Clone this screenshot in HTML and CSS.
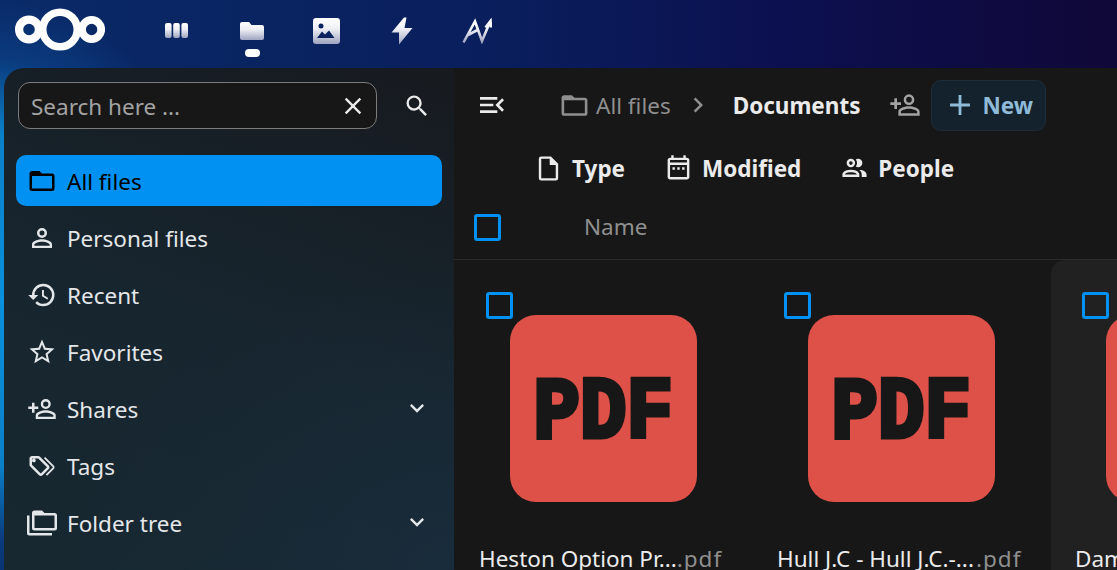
FILE: index.html
```html
<!DOCTYPE html>
<html lang="en">
<head>
<meta charset="utf-8">
<title>Documents - Files</title>
<link rel="stylesheet" href="styles.css">
</head>
<body>
<header class="topbar">
  <svg class="logo" viewBox="0 0 91 44" aria-hidden="true">
    <circle cx="15" cy="21.500" r="9.900" class="ring" stroke-width="8.200"/>
    <circle cx="46" cy="21.500" r="17.300" class="ring" stroke-width="7.600"/>
    <circle cx="77.600" cy="21.500" r="9.600" class="ring" stroke-width="7.800"/>
  </svg>
  <nav class="apps">
    <a class="app app-dash"><svg viewBox="0 0 23 15"><defs><linearGradient id="hg" x1="0" y1="0" x2="0" y2="1"><stop offset="0" stop-color="#ffffff"/><stop offset="0.4" stop-color="#f0f1f6"/><stop offset="1" stop-color="#9ea4c0"/></linearGradient></defs><rect x="0" y="0" width="6.600" height="15" rx="2" class="gr"/><rect x="8.200" y="0" width="6.600" height="15" rx="2" class="gr"/><rect x="16.400" y="0" width="6.600" height="15" rx="2" class="gr"/></svg></a>
    <a class="app app-files"><svg viewBox="0 0 24 18"><path class="gr" d="M2 0h7l2.500 3H22a2 2 0 0 1 2 2v11a2 2 0 0 1-2 2H2a2 2 0 0 1-2-2V2a2 2 0 0 1 2-2z"/></svg><span class="app-dot"></span></a>
    <a class="app app-photos"><svg viewBox="0 0 27 26"><path class="gr" fill-rule="evenodd" d="M3 0h21a3 3 0 0 1 3 3v20a3 3 0 0 1-3 3H3a3 3 0 0 1-3-3V3a3 3 0 0 1 3-3zM8 5.500a2.500 2.500 0 1 0 0 5 2.500 2.500 0 0 0 0-5zM4 20 L9 13.500 L12 16.500 L16 12.500 L21.500 20z"/></svg></a>
    <a class="app app-bolt"><svg viewBox="0 0 22 28"><path class="gr" d="M13 .5 L.5 15.500 H8 L8 27.500 L21.500 11 H13.500 L15.500 .5Z"/></svg></a>
    <a class="app app-av"><svg viewBox="0 0 30 26"><path class="gs" fill="none" stroke-width="2.600" d="M1.500 24.500 L13 3.500 L20 23 L27.500 5 M6 17 L15.500 12 M23.500 9.500 L28.500 3 L29 9.500"/></svg></a>
  </nav>
</header>

<main class="window">
  <aside class="sidebar">
    <div class="search-row">
      <div class="search-box">
        <span class="search-text">Search here ...</span>
        <svg class="ic ic-close" viewBox="0 0 24 24"><path d="M19,6.41L17.59,5L12,10.59L6.41,5L5,6.41L10.59,12L5,17.59L6.41,19L12,13.41L17.59,19L19,17.59L13.41,12L19,6.41Z"/></svg>
      </div>
      <svg class="ic ic-search" viewBox="0 0 24 24"><path d="M9.5,3A6.5,6.5 0 0,1 16,9.5C16,11.11 15.41,12.59 14.44,13.73L14.71,14H15.5L20.5,19L19,20.5L14,15.5V14.71L13.73,14.44C12.59,15.41 11.11,16 9.5,16A6.5,6.5 0 0,1 3,9.5A6.5,6.5 0 0,1 9.5,3M9.5,5C7,5 5,7 5,9.5C5,12 7,14 9.5,14C12,14 14,12 14,9.5C14,7 12,5 9.5,5Z"/></svg>
    </div>
    <ul class="nav">
      <li class="nav-item active"><svg class="ic" viewBox="0 0 24 24"><path d="M20,18H4V8H20M20,6H12L10,4H4C2.89,4 2,4.89 2,6V18A2,2 0 0,0 4,20H20A2,2 0 0,0 22,18V8C22,6.89 21.1,6 20,6Z"/></svg><span>All files</span></li>
      <li class="nav-item"><svg class="ic" viewBox="0 0 24 24"><path d="M12,4A4,4 0 0,1 16,8A4,4 0 0,1 12,12A4,4 0 0,1 8,8A4,4 0 0,1 12,4M12,6A2,2 0 0,0 10,8A2,2 0 0,0 12,10A2,2 0 0,0 14,8A2,2 0 0,0 12,6M12,13C14.67,13 20,14.33 20,17V20H4V17C4,14.33 9.33,13 12,13M12,14.9C9.03,14.9 5.9,16.36 5.9,17V18.1H18.1V17C18.1,16.36 14.97,14.9 12,14.9Z"/></svg><span>Personal files</span></li>
      <li class="nav-item"><svg class="ic" viewBox="0 0 24 24"><path d="M13.5,8H12V13L16.28,15.54L17,14.33L13.5,12.25V8M13,3A9,9 0 0,0 4,12H1L4.96,16.03L9,12H6A7,7 0 0,1 13,5A7,7 0 0,1 20,12A7,7 0 0,1 13,19C11.07,19 9.32,18.21 8.06,16.94L6.64,18.36C8.27,20 10.5,21 13,21A9,9 0 0,0 22,12A9,9 0 0,0 13,3"/></svg><span>Recent</span></li>
      <li class="nav-item"><svg class="ic" viewBox="0 0 24 24"><path d="M12,15.39L8.24,17.66L9.23,13.38L5.91,10.5L10.29,10.13L12,6.09L13.71,10.13L18.09,10.5L14.77,13.38L15.76,17.66M22,9.24L14.81,8.63L12,2L9.19,8.63L2,9.24L7.45,13.97L5.82,21L12,17.27L18.18,21L16.54,13.97L22,9.24Z"/></svg><span>Favorites</span></li>
      <li class="nav-item"><svg class="ic" viewBox="0 0 24 24"><path d="M15,4A4,4 0 0,0 11,8A4,4 0 0,0 15,12A4,4 0 0,0 19,8A4,4 0 0,0 15,4M15,5.9A2.1,2.1 0 0,1 17.1,8A2.1,2.1 0 0,1 15,10.1A2.1,2.1 0 0,1 12.9,8A2.1,2.1 0 0,1 15,5.9M4,7V10H1V12H4V15H6V12H9V10H6V7H4M15,13C12.33,13 7,14.33 7,17V20H23V17C23,14.33 17.67,13 15,13M15,14.9C17.97,14.9 21.1,16.36 21.1,17V18.1H8.9V17C8.9,16.36 12,14.9 15,14.9Z"/></svg><span>Shares</span><svg class="ic ic-chev" viewBox="0 0 24 24"><path d="M7.41,8.58L12,13.17L16.59,8.58L18,10L12,16L6,10L7.41,8.58Z"/></svg></li>
      <li class="nav-item"><svg class="ic" viewBox="0 0 24 24"><path fill-rule="evenodd" d="M5.5,9A1.5,1.5 0 0,0 7,7.5A1.5,1.5 0 0,0 5.5,6A1.5,1.5 0 0,0 4,7.5A1.5,1.5 0 0,0 5.5,9M17.41,11.58C17.77,11.94 18,12.44 18,13C18,13.55 17.78,14.05 17.41,14.41L12.41,19.41C12.05,19.77 11.55,20 11,20C10.45,20 9.95,19.78 9.58,19.41L2.59,12.42C2.22,12.05 2,11.55 2,11V6C2,4.89 2.89,4 4,4H9C9.55,4 10.05,4.22 10.41,4.58L17.41,11.58M4,6V11L11,18L16,13L9,6H4M13.54,5.71L14.54,4.71L21.41,11.58C21.78,11.94 22,12.45 22,13C22,13.55 21.78,14.05 21.42,14.41L16.04,19.79L15.04,18.79L20.75,13L13.54,5.71Z"/></svg><span>Tags</span></li>
      <li class="nav-item"><svg class="ic" viewBox="0 0 24 24"><path fill-rule="evenodd" d="M22,4A2,2 0 0,1 24,6V16A2,2 0 0,1 22,18H6A2,2 0 0,1 4,16V4A2,2 0 0,1 6,2H12L14,4H22M2,6V20H20V22H2A2,2 0 0,1 0,20V11H0V6H2M6,6V16H22V6H6Z"/></svg><span>Folder tree</span><svg class="ic ic-chev" viewBox="0 0 24 24"><path d="M7.41,8.58L12,13.17L16.59,8.58L18,10L12,16L6,10L7.41,8.58Z"/></svg></li>
    </ul>
  </aside>

  <section class="content">
    <div class="crumbs">
      <svg class="ic ic-menu" viewBox="0 0 24 24"><path d="M21,15.61L19.59,17L14.58,12L19.59,7L21,8.39L17.44,12L21,15.61M3,6H16V8H3V6M3,13V11H13V13H3M3,18V16H16V18H3Z"/></svg>
      <svg class="ic ic-root" viewBox="0 0 24 24"><path d="M20,18H4V8H20M20,6H12L10,4H4C2.89,4 2,4.89 2,6V18A2,2 0 0,0 4,20H20A2,2 0 0,0 22,18V8C22,6.89 21.1,6 20,6Z"/></svg>
      <span class="crumb-root">All files</span>
      <svg class="ic ic-sep" viewBox="0 0 24 24"><path d="M8.59,16.58L13.17,12L8.59,7.41L10,6L16,12L10,18L8.59,16.58Z"/></svg>
      <strong class="crumb-current">Documents</strong>
      <svg class="ic ic-share" viewBox="0 0 24 24"><path d="M15,4A4,4 0 0,0 11,8A4,4 0 0,0 15,12A4,4 0 0,0 19,8A4,4 0 0,0 15,4M15,5.9A2.1,2.1 0 0,1 17.1,8A2.1,2.1 0 0,1 15,10.1A2.1,2.1 0 0,1 12.9,8A2.1,2.1 0 0,1 15,5.9M4,7V10H1V12H4V15H6V12H9V10H6V7H4M15,13C12.33,13 7,14.33 7,17V20H23V17C23,14.33 17.67,13 15,13M15,14.9C17.97,14.9 21.1,16.36 21.1,17V18.1H8.9V17C8.9,16.36 12,14.9 15,14.9Z"/></svg>
      <button class="btn-new"><svg class="ic" viewBox="0 0 24 24"><path d="M19,13H13V19H11V13H5V11H11V5H13V11H19V13Z"/></svg><span>New</span></button>
    </div>
    <div class="filters">
      <div class="filter"><svg class="ic" viewBox="0 0 24 24"><path d="M14,2H6A2,2 0 0,0 4,4V20A2,2 0 0,0 6,22H18A2,2 0 0,0 20,20V8L14,2M18,20H6V4H13V9H18V20Z"/></svg><span>Type</span></div>
      <div class="filter"><svg class="ic" viewBox="0 0 24 24"><path d="M7 11H9V13H7V11M21 5V19C21 20.11 20.11 21 19 21H5C3.89 21 3 20.1 3 19V5C3 3.9 3.9 3 5 3H6V1H8V3H16V1H18V3H19C20.11 3 21 3.9 21 5M5 7H19V5H5V7M19 19V9H5V19H19M17 13V11H15V13H17M13 13V11H11V13H13Z"/></svg><span>Modified</span></div>
      <div class="filter"><svg class="ic" viewBox="0 0 24 24"><path d="M13.07 10.41A5 5 0 0 0 13.07 4.59A3.39 3.39 0 0 1 15 4A3.5 3.5 0 0 1 15 11A3.39 3.39 0 0 1 13.07 10.41M5.5 7.5A3.5 3.5 0 1 1 9 11A3.5 3.5 0 0 1 5.5 7.5M7.5 7.5A1.5 1.5 0 1 0 9 6A1.5 1.5 0 0 0 7.5 7.5M16 17V19H2V17S2 13 9 13 16 17 16 17M14 17C13.86 16.22 12.67 15 9 15S4.07 16.22 4 17M15.95 13A5.32 5.32 0 0 1 18 17V19H22V17S22 13.37 15.94 13Z"/></svg><span>People</span></div>
    </div>
    <div class="table-head">
      <span class="check"></span>
      <span class="col-name">Name</span>
    </div>
    <div class="grid">
      <article class="card">
        <span class="check check-card"></span>
        <div class="pdf"><span class="pdf-label">PDF</span></div>
        <p class="fname">Heston Option Pr...<span class="ext">.pdf</span></p>
      </article>
      <article class="card">
        <span class="check check-card"></span>
        <div class="pdf"><span class="pdf-label">PDF</span></div>
        <p class="fname">Hull J.C - Hull J.C.-...<span class="ext ext-gap">.pdf</span></p>
      </article>
      <article class="card card-hover">
        <span class="check check-card"></span>
        <div class="pdf"><span class="pdf-label">PDF</span></div>
        <p class="fname">Dam</p>
      </article>
    </div>
  </section>
</main>
</body>
</html>
```
FILE: styles.css
```css
* { box-sizing: border-box; }
html, body { margin: 0; height: 100%; }
body {
  width: 1117px;
  height: 570px;
  overflow: hidden;
  display: flex;
  flex-direction: column;
  font-family: "Noto Sans", sans-serif;
  font-size: 22.5px;
  color: #ebebeb;
  background:
    radial-gradient(ellipse 220px 300px at 0 300px, #0a90dc 0%, #0a80c8 55%, rgba(10,70,140,0.6) 80%, rgba(10,50,120,0) 100%),
    linear-gradient(90deg, #0a2a68 0%, #0a1e5c 45%, #0c1050 70%, #100838 100%);
}
.topbar {
  height: 68px;
  flex: none;
  display: flex;
  padding: 8px 0 0 14px;
}
.logo { width: 91px; height: 44px; flex: none; }
.ring { fill: none; stroke: #fff; }
.gr { fill: url(#hg); }
.gs { stroke: url(#hg); }
.apps { display: flex; align-items: flex-start; margin-left: 60px; }
.app { display: flex; flex-direction: column; align-items: center; flex: none; }
.app svg { display: block; }
.app-dash { margin-top: 15px; width: 23px; }
.app-dash svg { width: 23px; height: 15px; }
.app-files { margin: 14px 0 0 52px; width: 24px; }
.app-files svg { width: 24px; height: 18px; }
.app-dot { width: 15px; height: 8px; border-radius: 4px; background: #fff; margin-top: 9px; }
.app-photos { margin: 10px 0 0 49px; width: 27px; }
.app-photos svg { width: 27px; height: 26px; }
.app-bolt { margin: 9px 0 0 51px; width: 22px; }
.app-bolt svg { width: 22px; height: 28px; }
.app-av { margin: 10px 0 0 49px; width: 30px; }
.app-av svg { width: 30px; height: 26px; }

.window { flex: 1; min-height: 0; display: flex; margin-left: 4px; }
.ic { width: 24px; height: 24px; fill: currentColor; flex: none; display: block; }
.sidebar {
  width: 450px;
  flex: none;
  padding: 14px 12px 0 12px;
  border-top-left-radius: 20px;
  background:
    radial-gradient(ellipse 380px 300px at 100% 100%, rgba(26,48,68,0.55) 0%, rgba(26,48,68,0) 100%),
    linear-gradient(200deg, #171a1f 0%, #17252e 50%, #172831 100%);
}
.search-row { display: flex; align-items: center; padding: 0 0 0 2px; }
.search-box {
  width: 359px;
  height: 47px;
  display: flex;
  align-items: center;
  justify-content: space-between;
  padding: 0 9px 0 12px;
  background: #171717;
  border: 1px solid #7c7c7c;
  border-radius: 12px;
}
.search-text { color: #a3a3a3; padding-top: 1px; }
.ic-close { width: 28px; height: 28px; color: #ebebeb; }
.ic-search { width: 28px; height: 28px; margin-left: 26px; color: #ebebeb; }
.nav { list-style: none; margin: 26px 0 0; padding: 0; display: flex; flex-direction: column; gap: 6px; width: 426px; }
.nav-item { height: 51px; display: flex; align-items: center; padding: 0 11px; border-radius: 10px; color: #e4e7e9; }
.nav-item > span { margin-left: 10px; flex: 1; padding-top: 2px; }
.nav-item.active { background: #0091f2; color: #000; }
.nav-item > .ic:first-child { width: 30px; height: 30px; }
.nav-item > .ic-chev { width: 28px; height: 28px; margin-bottom: 2px; }

.content { flex: 1; min-width: 0; background: #171717; display: flex; flex-direction: column; }
.crumbs { height: 62px; margin-top: 6px; display: flex; align-items: center; padding-left: 22px; }
.ic-menu { width: 32px; height: 32px; color: #ebebeb; }
.ic-root { width: 31px; height: 31px; margin-left: 51px; color: #8f8f8f; }
.crumb-root { color: #8f8f8f; margin-left: 6px; }
.ic-sep { width: 30px; height: 30px; margin-left: 12px; color: #8f8f8f; }
.crumb-current { margin-left: 20px; font-weight: 700; color: #ebebeb; }
.ic-share { width: 32px; height: 32px; margin-left: 29px; color: #a3a3a3; }
.btn-new {
  height: 51px;
  width: 115px;
  margin-left: 10px;
  display: flex;
  align-items: center;
  padding: 0 0 0 11px;
  background: #14222d;
  border: 1px solid #1c2e3b;
  border-radius: 10px;
  font: 700 22.5px "Noto Sans", sans-serif;
  color: #90bbd8;
}
.btn-new .ic { width: 34px; height: 34px; margin-right: 5px; }
.filters { height: 50px; margin-top: 7px; display: flex; align-items: center; padding-left: 80px; font-weight: 700; gap: 39px; }
.filter { display: flex; align-items: center; gap: 9px; color: #ebebeb; }
.filter .ic { width: 29px; height: 29px; }
.table-head { height: 67px; padding: 3px 0 0 20px; display: flex; align-items: center; border-bottom: 1px solid #2b2b2b; }
.check { display: block; width: 27px; height: 27px; border: 3px solid #0091f2; border-radius: 3px; flex: none; }
.col-name { margin: -2px 0 0 83px; color: #8f8f8f; }
.grid { display: grid; grid-template-columns: repeat(3, 298px); padding-left: 1px; flex: 1; min-height: 0; }
.card { position: relative; padding: 55px 0 0 55px; border-radius: 14px 0 0 0; overflow: hidden; }
.card-hover { background: #212121; }
.check-card { position: absolute; left: 31px; top: 32px; z-index: 1; }
.pdf { width: 187px; height: 187px; border-radius: 26px; background: #de5148; display: flex; align-items: center; justify-content: center; overflow: hidden; }
.pdf-label {
  font-family: "Liberation Mono", monospace;
  font-weight: 700;
  font-size: 88px;
  line-height: 1;
  color: #171717;
  -webkit-text-stroke: 5px #171717;
  transform: scaleX(0.88);
  margin-top: 10px;
}
.fname { margin: 42px 0 0 -31px; white-space: nowrap; color: #ebebeb; line-height: 30px; }
.ext { color: #8f8f8f; letter-spacing: 1px; }
.ext-gap { margin-left: 2px; }
```
